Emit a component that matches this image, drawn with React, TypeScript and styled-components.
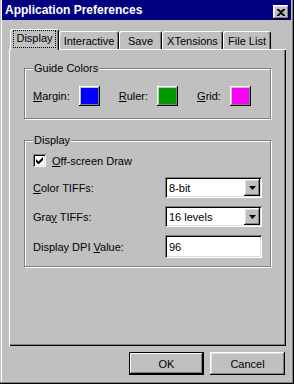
import React from 'react';
import styled, { createGlobalStyle, css } from 'styled-components';

const GlobalStyle = createGlobalStyle`
  html, body {
    margin: 0;
    padding: 0;
    background: #c0c0c0;
  }
  body {
    font-family: "Liberation Sans", Arial, sans-serif;
    font-size: 11px;
    color: #000;
  }
`;

const raised = css`
  box-shadow: inset -1px -1px #000, inset 1px 1px #fff, inset -2px -2px #808080, inset 2px 2px #dfdfdf;
`;

const sunken = css`
  box-shadow: inset 1px 1px #808080, inset -1px -1px #fff, inset 2px 2px #000, inset -2px -2px #dfdfdf;
`;

const Window = styled.div`
  width: 294px;
  height: 384px;
  box-sizing: border-box;
  padding: 0 3px 3px 2px;
  display: flex;
  flex-direction: column;
  background: #c0c0c0;
  box-shadow: inset -1px -1px #000, inset -2px -2px #808080, inset 1px 0 #c0c0c0, inset 2px 0 #fff;
`;

const TitleBar = styled.div`
  height: 20px;
  box-sizing: border-box;
  padding: 0 2px 1px 3px;
  background: #000080;
  color: #fff;
  display: flex;
  align-items: flex-end;
  justify-content: space-between;
`;

const Title = styled.span`
  font-weight: bold;
  font-size: 12px;
  line-height: 15px;
  padding-bottom: 1px;
`;

const CloseButton = styled.div`
  width: 16px;
  height: 14px;
  background: #c0c0c0;
  ${raised};
  display: flex;
  align-items: center;
  justify-content: center;
`;

const Body = styled.div`
  flex: 1;
  display: flex;
  flex-direction: column;
  padding: 9px 5px 0 7px;
`;

const TabStrip = styled.div`
  display: flex;
  align-items: flex-end;
  padding-left: 1px;
  position: relative;
  z-index: 1;
`;

const Tab = styled.div<{ $w: number; $active?: boolean }>`
  width: ${(p) => p.$w}px;
  height: ${(p) => (p.$active ? 21 : 18)}px;
  margin-bottom: ${(p) => (p.$active ? -1 : 0)}px;
  box-sizing: border-box;
  border: 1px solid;
  border-color: #fff #000 transparent #fff;
  border-bottom: none;
  border-radius: 3px 3px 0 0;
  background: #c0c0c0;
  box-shadow: inset -1px 0 #808080;
  display: flex;
  align-items: flex-start;
  justify-content: center;
  padding-top: ${(p) => (p.$active ? 1 : 2)}px;
`;

const FocusLabel = styled.span<{ $focus?: boolean }>`
  padding: 1px 2px 2px;
  line-height: 13px;
  outline: ${(p) => (p.$focus ? '1px dotted #000' : 'none')};
`;

const Panel = styled.div`
  flex: 1;
  background: #c0c0c0;
  box-shadow: inset 1px 1px #fff, inset -1px -1px #000, inset -2px -2px #808080;
  padding: 13px 15px 11px;
  display: flex;
  flex-direction: column;
  gap: 15px;
`;

const Group = styled.fieldset<{ $pt: number; $pb: number }>`
  margin: 0;
  min-width: 0;
  padding: ${(p) => p.$pt}px 8px ${(p) => p.$pb}px 8px;
  border: 1px solid #808080;
  box-shadow: inset 1px 1px #fff, 1px 1px #fff;
`;

const Legend = styled.legend`
  padding: 0 1px;
  line-height: 13px;
  background: #c0c0c0;
`;

const SwatchRow = styled.div`
  display: flex;
  align-items: center;
  gap: 19px;
`;

const SwatchPair = styled.div`
  display: flex;
  align-items: center;
  gap: 9px;
`;

const Swatch = styled.div<{ $color: string }>`
  width: 21px;
  height: 20px;
  background: ${(p) => p.$color};
  box-shadow: inset -1px -1px #000, inset 1px 1px #fff, inset -2px -2px #808080, inset 2px 2px #c0c0c0;
`;

const Key = styled.span`
  text-decoration: underline;
`;

const CheckRow = styled.div`
  display: flex;
  align-items: center;
  gap: 6px;
  margin-bottom: 10px;
`;

const CheckBox = styled.div`
  width: 13px;
  height: 13px;
  background: #fff;
  ${sunken};
  display: flex;
  align-items: center;
  justify-content: center;
`;

const FieldList = styled.div`
  display: flex;
  flex-direction: column;
  gap: 8px;
`;

const FieldRow = styled.div`
  display: grid;
  grid-template-columns: 1fr 97px;
  align-items: center;
`;

const Field = styled.div<{ $h: number }>`
  height: ${(p) => p.$h}px;
  box-sizing: border-box;
  background: #fff;
  ${sunken};
  display: flex;
  align-items: center;
  padding: 2px;
`;

const FieldText = styled.span`
  flex: 1;
  padding-left: 2px;
`;

const ArrowButton = styled.div`
  width: 16px;
  height: 100%;
  background: #c0c0c0;
  ${raised};
  display: flex;
  align-items: center;
  justify-content: center;
`;

const ButtonRow = styled.div`
  display: flex;
  justify-content: flex-end;
  gap: 6px;
  padding: 6px 1px 6px 0;
`;

const Button = styled.div<{ $default?: boolean }>`
  width: 75px;
  height: 23px;
  box-sizing: border-box;
  background: #c0c0c0;
  display: flex;
  align-items: center;
  justify-content: center;
  ${(p) =>
    p.$default
      ? css`
          box-shadow: inset 0 0 0 1px #000, inset -2px -2px #000, inset 2px 2px #fff, inset -3px -3px #808080;
        `
      : raised};
`;

const Arrow = () => (
  <svg width="7" height="4" viewBox="0 0 7 4">
    <path d="M0 0h7L3.5 4z" fill="#000" />
  </svg>
);

const Select = ({ value }: { value: string }) => (
  <Field $h={21}>
    <FieldText>{value}</FieldText>
    <ArrowButton>
      <Arrow />
    </ArrowButton>
  </Field>
);

const tabs = [
  { label: 'Display', w: 49 },
  { label: 'Interactive', w: 60 },
  { label: 'Save', w: 43 },
  { label: 'XTensions', w: 61 },
  { label: 'File List', w: 48 },
];

export default function App() {
  return (
    <>
      <GlobalStyle />
      <Window>
        <TitleBar>
          <Title>Application Preferences</Title>
          <CloseButton>
            <svg width="8" height="7" viewBox="0 0 8 7">
              <path d="M0 0h2l2 2 2-2h2v1L5 3.5 8 6v1H6L4 5 2 7H0V6l3-2.5L0 1z" fill="#000" />
            </svg>
          </CloseButton>
        </TitleBar>
        <Body>
          <TabStrip>
            {tabs.map((t, i) => (
              <Tab key={t.label} $w={t.w} $active={i === 0}>
                <FocusLabel $focus={i === 0}>{t.label}</FocusLabel>
              </Tab>
            ))}
          </TabStrip>
          <Panel>
            <Group $pt={11} $pb={12}>
              <Legend>Guide Colors</Legend>
              <SwatchRow>
                <SwatchPair>
                  <span><Key>M</Key>argin:</span>
                  <Swatch $color="#0000ff" />
                </SwatchPair>
                <SwatchPair>
                  <span><Key>R</Key>uler:</span>
                  <Swatch $color="#009900" />
                </SwatchPair>
                <SwatchPair>
                  <span><Key>G</Key>rid:</span>
                  <Swatch $color="#ff00ff" />
                </SwatchPair>
              </SwatchRow>
            </Group>
            <Group $pt={7} $pb={8}>
              <Legend>Display</Legend>
              <CheckRow>
                <CheckBox>
                  <svg width="7" height="7" viewBox="0 0 7 7">
                    <path d="M0 2v3l2 2h1l4-4V0L2.5 4.5z" fill="#000" />
                  </svg>
                </CheckBox>
                <span><Key>O</Key>ff-screen Draw</span>
              </CheckRow>
              <FieldList>
                <FieldRow>
                  <span><Key>C</Key>olor TIFFs:</span>
                  <Select value="8-bit" />
                </FieldRow>
                <FieldRow>
                  <span>Gra<Key>y</Key> TIFFs:</span>
                  <Select value="16 levels" />
                </FieldRow>
                <FieldRow>
                  <span>Display DPI <Key>V</Key>alue:</span>
                  <Field $h={23}>
                    <FieldText>96</FieldText>
                  </Field>
                </FieldRow>
              </FieldList>
            </Group>
          </Panel>
          <ButtonRow>
            <Button $default>OK</Button>
            <Button>Cancel</Button>
          </ButtonRow>
        </Body>
      </Window>
    </>
  );
}
